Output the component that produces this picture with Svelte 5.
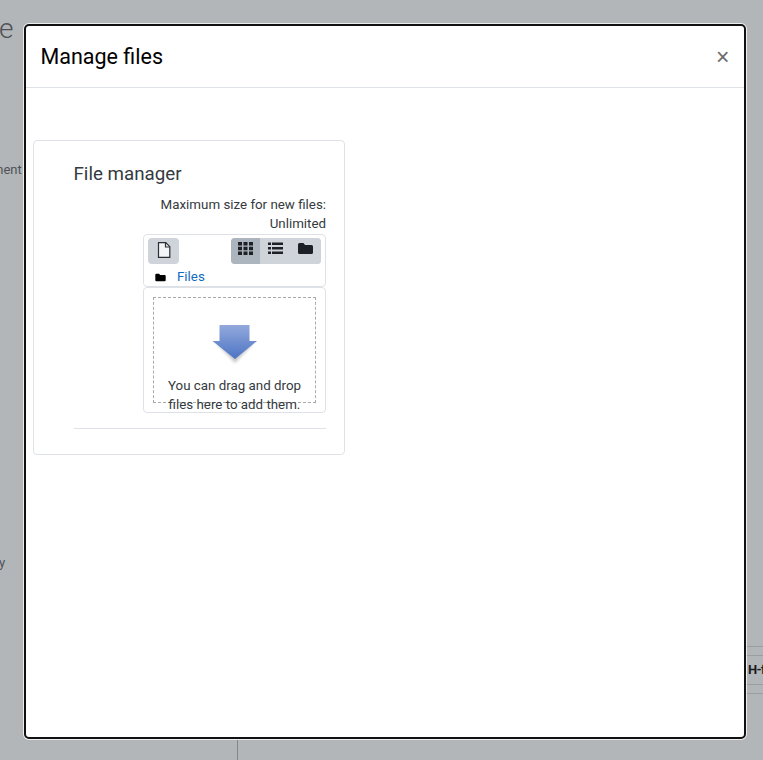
<script>
  const views = ['grid', 'list', 'tree'];
</script>

<div class="page">
  <span class="bg bg-e">e</span>
  <span class="bg bg-ment">ment</span>
  <span class="bg bg-y">y</span>
  <div class="bg bg-table"><b>H-f</b></div>
  <div class="bg bg-rule"></div>

  <section class="modal">
    <header class="head">
      <h2>Manage files</h2>
      <span class="close">×</span>
    </header>
    <div class="body">
      <div class="card">
        <h3>File manager</h3>
        <div class="limit">Maximum size for new files:<br />Unlimited</div>
        <div class="toolbar">
          <div class="tools">
            <button class="btn add" aria-label="Add">
              <svg width="14" height="16" viewBox="0 0 14 16"><path d="M1.5.7h7.3l4 4v10.6H1.500z" fill="#f4f5f6" stroke="#2b2f33" stroke-width="1.200"/><path d="M8.500 1v4h4" fill="none" stroke="#2b2f33" stroke-width="1.200"/></svg>
            </button>
            <div class="views">
              {#each views as v, i}
                <button class="view" class:active={i === 0} aria-label={v}>
                  {#if v === 'grid'}
                    <svg width="15" height="13" viewBox="0 0 15 13" fill="#1d2125"><rect x="0" y="0" width="4" height="3.500"/><rect x="5.500" y="0" width="4" height="3.500"/><rect x="11" y="0" width="4" height="3.500"/><rect x="0" y="4.750" width="4" height="3.500"/><rect x="5.500" y="4.750" width="4" height="3.500"/><rect x="11" y="4.750" width="4" height="3.500"/><rect x="0" y="9.500" width="4" height="3.500"/><rect x="5.500" y="9.500" width="4" height="3.500"/><rect x="11" y="9.500" width="4" height="3.500"/></svg>
                  {:else if v === 'list'}
                    <svg width="15" height="13" viewBox="0 0 15 13" fill="#1d2125"><rect x="0" y="0.500" width="3" height="2.500"/><rect x="4" y="0.500" width="11" height="2.500"/><rect x="0" y="5" width="3" height="2.500"/><rect x="4" y="5" width="11" height="2.500"/><rect x="0" y="9.500" width="3" height="2.500"/><rect x="4" y="9.500" width="11" height="2.500"/></svg>
                  {:else}
                    <svg width="15" height="13" viewBox="0 0 15 13" fill="#1d2125"><path d="M1.500 1h4l1.500 2h6.500a1.500 1.500 0 0 1 1.500 1.500v6a1.500 1.500 0 0 1-1.500 1.500h-12A1.500 1.500 0 0 1 0 10.500v-8A1.500 1.500 0 0 1 1.500 1z"/></svg>
                  {/if}
                </button>
              {/each}
            </div>
          </div>
          <div class="path">
            <svg width="11" height="9" viewBox="0 0 15 13" fill="#000"><path d="M1.500 1h4l1.500 2h6.500a1.500 1.500 0 0 1 1.500 1.500v6a1.500 1.500 0 0 1-1.500 1.500h-12A1.500 1.500 0 0 1 0 10.500v-8A1.500 1.500 0 0 1 1.500 1z"/></svg>
            <a href="#files">Files</a>
          </div>
        </div>
        <div class="drop">
          <div class="dash">
            <svg class="arrow" width="52" height="42" viewBox="0 0 52 42">
              <defs>
                <linearGradient id="ar" x1="0" y1="0" x2="0" y2="1">
                  <stop offset="0" stop-color="#93a9dc"/>
                  <stop offset="1" stop-color="#4c74c4"/>
                </linearGradient>
                <filter id="sh" x="-20%" y="-20%" width="140%" height="150%">
                  <feGaussianBlur stdDeviation="1.500"/>
                </filter>
              </defs>
              <path d="M14 6h24v13h6L26 38 8 19h6z" transform="translate(0 1)" fill="#000" opacity=".22" filter="url(#sh)"/>
              <path d="M10.500 1h30v16h7.500L26 35 3.500 17h7z" fill="url(#ar)"/>
            </svg>
            <p>You can drag and drop<br />files here to add them.</p>
          </div>
        </div>
        <hr />
      </div>
    </div>
  </section>
</div>

<style>
  :global(body) {
    margin: 0;
    background: #b3b6b9;
  }
  .page {
    position: relative;
    width: 763px;
    height: 760px;
    overflow: hidden;
    background: #b3b6b9;
    font-family: Roboto, "Liberation Sans", sans-serif;
    color: #343a40;
    box-sizing: border-box;
    padding: 24px 0 0 24px;
  }
  .bg { position: absolute; color: #4e5257; font-size: 13px; line-height: 16px; }
  .bg-e { left: -1px; top: 11px; font-size: 28px; line-height: 36px; font-weight: 300; }
  .bg-ment { left: -8px; top: 162px; }
  .bg-y { left: -1px; top: 555px; }
  .bg-table {
    left: 746px; top: 646px; width: 30px; height: 46px;
    border-top: 1px solid #9b9ea1;
    border-bottom: 1px solid #9b9ea1;
    background:
      linear-gradient(#9b9ea1, #9b9ea1) 0 8px / 100% 1px no-repeat,
      linear-gradient(#9b9ea1, #9b9ea1) 0 37px / 100% 1px no-repeat;
    display: flex; align-items: center;
    padding-left: 2px;
    overflow: hidden;
    color: #17191c;
    font-size: 13px;
    letter-spacing: -.6px;
  }
  .bg-rule { left: 237px; top: 740px; width: 1px; height: 20px; background: #84878a; }
  .modal {
    position: relative;
    box-sizing: border-box;
    width: 722px;
    height: 715px;
    background: #fff;
    border: 2px solid #111;
    border-radius: 5px;
    box-shadow: 0 0 0 1px rgba(255,255,255,.75);
  }
  .head {
    height: 62px;
    box-sizing: border-box;
    border-bottom: 1px solid #dee2e6;
    display: flex;
    align-items: center;
    justify-content: space-between;
    padding: 0 14.500px 1px 14.500px;
  }
  h2 { margin: 0; font-size: 21.500px; font-weight: 400; color: #000; }
  .close { font-size: 23px; font-weight: 400; color: #6e6a6a; line-height: 1; margin-top: 2px; font-family: "Liberation Sans", sans-serif; }
  .body { padding: 52px 7px 0; }
  .card {
    box-sizing: border-box;
    width: 312px;
    height: 315px;
    border: 1px solid #dee2e6;
    border-radius: 4px;
    padding: 20px 18px 0 39.500px;
    display: flex;
    flex-direction: column;
  }
  h3 { margin: 0; font-size: 18.750px; line-height: 26px; font-weight: 400; color: #343a40; }
  .limit {
    margin-top: 8px;
    text-align: right;
    font-size: 13.330px;
    line-height: 19px;
    color: #343a40;
  }
  .toolbar {
    margin: 1px 0 0 69.500px;
    height: 53px;
    box-sizing: border-box;
    border: 1px solid #dee2e6;
    border-radius: 4px;
    padding: 3px 4px 0;
  }
  .tools { display: flex; justify-content: space-between; }
  button { border: 0; padding: 0; margin: 0; display: flex; align-items: center; justify-content: center; font: inherit; }
  .btn.add { width: 31px; height: 26px; background: #ced4da; border-radius: 4px; padding-bottom: 3px; }
  .views { display: flex; background: #ced4da; border-radius: 4px; overflow: hidden; }
  .view { width: 30.500px; height: 26px; background: #ced4da; padding-bottom: 6px; }
  .view.active { width: 29px; background: #acb5bd; }
  .path {
    display: flex;
    align-items: center;
    gap: 11px;
    padding: 3px 0 0 7px;
    height: 19px;
    font-size: 13.330px;
  }
  .path svg { margin-top: 2px; }
  a { color: #0f6cbf; text-decoration: none; }
  .drop {
    margin: 0 0 0 69.500px;
    height: 126px;
    box-sizing: border-box;
    border: 1px solid #dee2e6;
    border-radius: 4px;
    padding: 9px;
  }
  .dash {
    height: 104px;
    box-sizing: content-box;
    border: 1px dashed #aaa;
    text-align: center;
    position: relative;
  }
  .arrow { display: block; margin: 26px auto 0; }
  p {
    margin: 10px 0 0;
    font-size: 13.330px;
    line-height: 19px;
    color: #343a40;
  }
  hr { margin: 15px 0 0; border: 0; border-top: 1px solid #dee2e6; }
</style>
